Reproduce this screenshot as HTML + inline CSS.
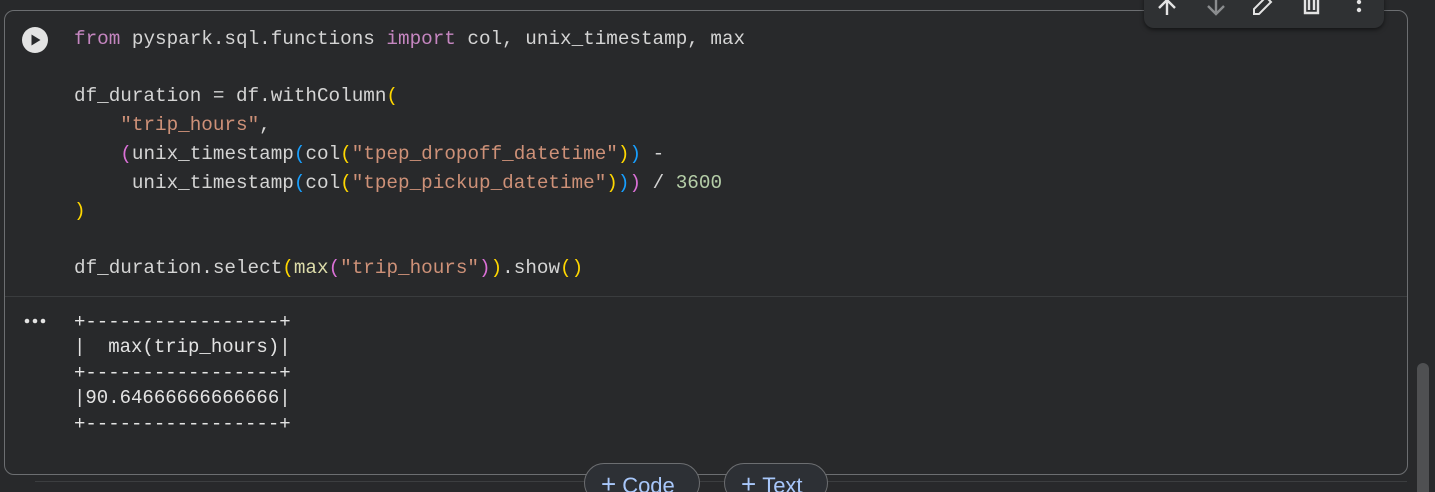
<!DOCTYPE html>
<html><head><meta charset="utf-8"><style>
html,body{margin:0;width:1435px;height:492px;overflow:hidden}
body{background:#28292b;position:relative;font-family:"Liberation Mono",monospace}
.cell{position:absolute;left:4px;top:10px;width:1404px;height:465px;border:1px solid #6c6e71;border-radius:10px;box-sizing:border-box}
.div{position:absolute;left:5px;top:296px;width:1402px;height:1px;background:#3a3c3e}
.l{position:absolute;left:74px;font-size:19.3px;white-space:pre;color:#d4d4d4;line-height:20px}
.k{color:#c586c0}.s{color:#ce9178}.y{color:#ffd700}.p{color:#da70d6}.b{color:#179fff}.n{color:#b5cea8}.f{color:#dcdcaa}
.o{position:absolute;left:74px;font-size:19px;white-space:pre;color:#e3e3e3;line-height:20px}
.tb{position:absolute;left:1144px;top:-10px;width:240px;height:38px;background:#2f3133;border-radius:10px;box-shadow:0 2px 4px rgba(0,0,0,.5)}
.btn{position:absolute;top:463px;height:40px;border:1px solid #6c6e71;border-radius:20px;background:#2d3035;color:#a8c7fa;font-family:"Liberation Sans",sans-serif;font-size:22px;line-height:40px;box-sizing:border-box;padding-left:16px}
.btn b{font-weight:normal;font-size:26px;margin-right:6px}
.bl{position:absolute;top:481px;left:35px;width:1372px;height:1px;background:#3c3e40}
.sc{position:absolute;left:1417px;top:363px;width:12px;height:140px;border-radius:6px;background:#4f5052}
</style></head><body>
<div class="cell"></div>
<div class="div"></div>
<div class="bl"></div>
<svg style="position:absolute;left:21px;top:26px" width="28" height="28" viewBox="0 0 28 28"><circle cx="14" cy="14" r="13" fill="#e3e3e3"/><path d="M10.5 8.5 L19.5 14 L10.5 19.5Z" fill="#28292b"/></svg>
<div class="l" style="top:29px"><span class="k">from</span> pyspark.sql.functions <span class="k">import</span> col, unix_timestamp, max</div>
<div class="l" style="top:86px">df_duration = df.withColumn<span class="y">(</span></div>
<div class="l" style="top:115px">    <span class="s">"trip_hours"</span>,</div>
<div class="l" style="top:144px">    <span class="p">(</span>unix_timestamp<span class="b">(</span>col<span class="y">(</span><span class="s">"tpep_dropoff_datetime"</span><span class="y">)</span><span class="b">)</span> -</div>
<div class="l" style="top:173px">     unix_timestamp<span class="b">(</span>col<span class="y">(</span><span class="s">"tpep_pickup_datetime"</span><span class="y">)</span><span class="b">)</span><span class="p">)</span> / <span class="n">3600</span></div>
<div class="l" style="top:201px"><span class="y">)</span></div>
<div class="l" style="top:258px">df_duration.select<span class="y">(</span><span class="f">max</span><span class="p">(</span><span class="s">"trip_hours"</span><span class="p">)</span><span class="y">)</span>.show<span class="y">()</span></div>
<svg style="position:absolute;left:24px;top:317px" width="22" height="8"><circle cx="3" cy="4" r="2.3" fill="#e3e3e3"/><circle cx="11" cy="4" r="2.3" fill="#e3e3e3"/><circle cx="19" cy="4" r="2.3" fill="#e3e3e3"/></svg>
<div class="o" style="top:312px">+-----------------+</div>
<div class="o" style="top:337px">|  max(trip_hours)|</div>
<div class="o" style="top:363px">+-----------------+</div>
<div class="o" style="top:388px">|90.64666666666666|</div>
<div class="o" style="top:414px">+-----------------+</div>
<div class="tb"></div>
<svg style="position:absolute;left:1144px;top:0" width="240" height="28" fill="none" stroke-width="2.4">
<path d="M23 15 V0 M15 8 L23 0 L31 8" stroke="#e3e3e3"/>
<path d="M72 0 V14 M64 6 L72 14 L80 6" stroke="#8a8c8e"/>
<path d="M110 14 L110 9 L122 -3 L127 2 L115 14 Z" stroke="#e3e3e3" stroke-width="2"/>
<path d="M161 0 V13 H174 V0 M165 0 V10 M170 0 V10" stroke="#e3e3e3"/>
<circle cx="215" cy="2" r="2.2" fill="#e3e3e3" stroke="none"/><circle cx="215" cy="10" r="2.2" fill="#e3e3e3" stroke="none"/>
</svg>
<div class="btn" style="left:584px;width:116px"><b>+</b>Code</div>
<div class="btn" style="left:724px;width:104px"><b>+</b>Text</div>
<div class="sc"></div>
</body></html>
